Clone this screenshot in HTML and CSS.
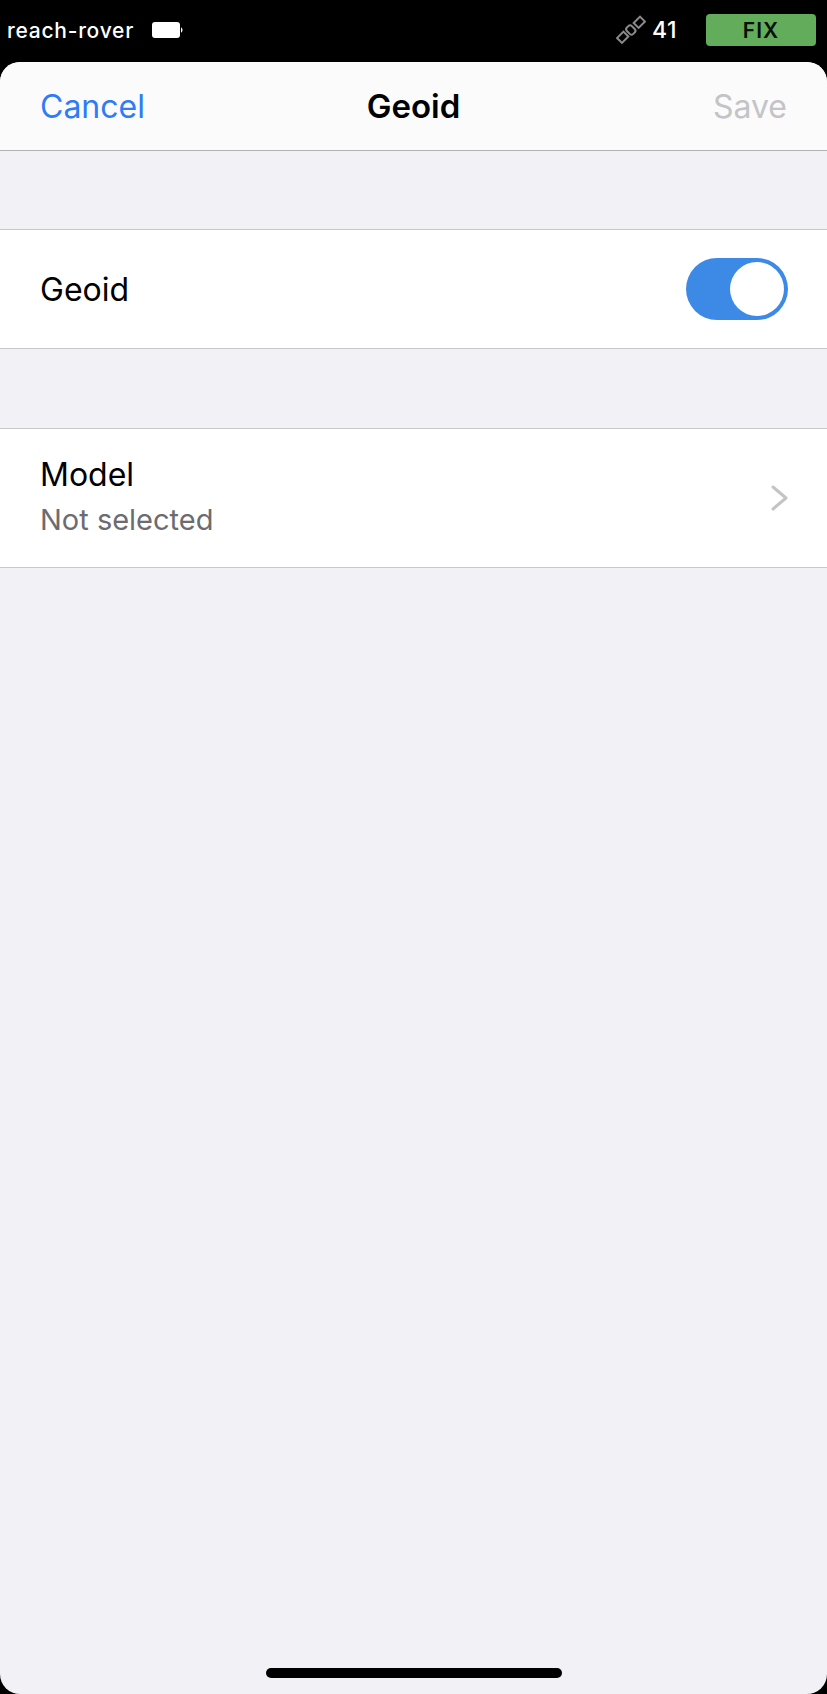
FILE: index.html
```html
<!DOCTYPE html>
<html lang="en">
<head>
   <meta charset="UTF-8">
   <meta name="viewport" content="width=device-width, initial-scale=1.0">
   <title>Geoid</title>
   <link rel="stylesheet" href="styles.css">
</head>
<body>
   <div class="status">
      <div class="status-left">
         <span class="device">reach-rover</span>
         <svg class="battery" width="32" height="16" viewBox="0 0 32 16">
            <rect x="0" y="0" width="28" height="16" rx="3" fill="#fff"/>
            <path d="M29 5.5 C31 6 31 10 29 10.500 Z" fill="#fff"/>
         </svg>
      </div>
      <div class="status-right">
         <svg class="satellite" width="30" height="30" viewBox="0 0 30 30" fill="none" stroke="#8a8a8a" stroke-width="2">
            <rect x="-4.500" y="-3.500" width="9" height="7" transform="translate(6.700 22.300) rotate(-45)"/>
            <rect x="-4.500" y="-3.500" width="9" height="7" transform="translate(23.300 7.300) rotate(-45)"/>
            <rect x="-3.500" y="-4.500" width="7" height="9" rx="2.500" transform="translate(14.800 15) rotate(-45)"/>
         </svg>
         <span class="sat-count">41</span>
         <span class="fix">FIX</span>
      </div>
   </div>

   <div class="sheet">
      <div class="nav">
         <span class="nav-btn cancel">Cancel</span>
         <span class="nav-title">Geoid</span>
         <span class="nav-btn save">Save</span>
      </div>

      <div class="row row-toggle">
         <span class="row-label">Geoid</span>
         <div class="toggle"><div class="knob"></div></div>
      </div>

      <div class="row row-model">
         <div class="row-text">
            <span class="row-label">Model</span>
            <span class="row-sub">Not selected</span>
         </div>
         <svg class="chevron" width="20" height="26" viewBox="0 0 20 26" fill="none" stroke="#c4c4c6" stroke-width="3" stroke-linecap="round" stroke-linejoin="round">
            <path d="M3 2 L16 13 L3 24"/>
         </svg>
      </div>

      <div class="home-wrap"><div class="home-bar"></div></div>
   </div>
</body>
</html>
```

FILE: styles.css
```css
* {
   box-sizing: border-box;
}

html, body {
   margin: 0;
   height: 100%;
   background: #000;
}

body {
   display: flex;
   flex-direction: column;
   font-family: Inter, "Liberation Sans", sans-serif;
}

.status {
   height: 62px;
   display: flex;
   justify-content: space-between;
   align-items: center;
   padding: 0 11px 2px 7px;
   color: #fff;
}

.status-left, .status-right {
   display: flex;
   align-items: center;
}

.device {
   font-size: 21px;
   font-weight: 500;
   letter-spacing: .75px;
}

.battery {
   margin-left: 18px;
}

.sat-count {
   font-size: 23px;
   font-weight: 500;
   letter-spacing: .5px;
   margin-left: 6px;
}

.fix {
   width: 110px;
   height: 32px;
   margin-left: 29px;
   background: #62ac5c;
   border-radius: 4px;
   color: #061005;
   font-size: 21px;
   font-weight: 600;
   letter-spacing: 1px;
   display: flex;
   justify-content: center;
   align-items: center;
}

.sheet {
   flex: 1;
   display: flex;
   flex-direction: column;
   background: #f1f1f6;
   border-radius: 20px;
   overflow: hidden;
}

.nav {
   height: 89px;
   display: grid;
   grid-template-columns: 1fr auto 1fr;
   align-items: center;
   padding: 0 40px;
   background: #fbfbfc;
   border-bottom: 1px solid #b2b2b4;
   font-size: 32px;
}

.cancel {
   color: #2f7cf6;
}

.save {
   color: #c4c4c6;
   justify-self: end;
}

.nav-title {
   font-size: 33px;
   font-weight: 600;
   color: #000;
}

.row {
   display: flex;
   justify-content: space-between;
   align-items: center;
   padding: 0 39px 0 40px;
   background: #fff;
   border-top: 1px solid #c8c8ca;
   border-bottom: 1px solid #c8c8ca;
}

.row-toggle {
   height: 120px;
   margin-top: 78px;
}

.row-model {
   height: 140px;
   margin-top: 79px;
   padding-right: 37px;
}

.row-text {
   display: flex;
   flex-direction: column;
   margin-top: -4px;
}

.row-label {
   font-size: 32px;
   color: #000;
}

.row-sub {
   font-size: 29px;
   color: #6c6c70;
   margin-top: 8px;
}

.toggle {
   width: 102px;
   height: 62px;
   border-radius: 31px;
   background: #3d8ae6;
   padding: 4px;
   display: flex;
   justify-content: flex-end;
}

.knob {
   width: 54px;
   height: 54px;
   border-radius: 50%;
   background: #fff;
}

.home-wrap {
   margin-top: auto;
   padding-bottom: 16px;
   display: flex;
   justify-content: center;
}

.home-bar {
   width: 296px;
   height: 10px;
   border-radius: 5px;
   background: #000;
}
```
